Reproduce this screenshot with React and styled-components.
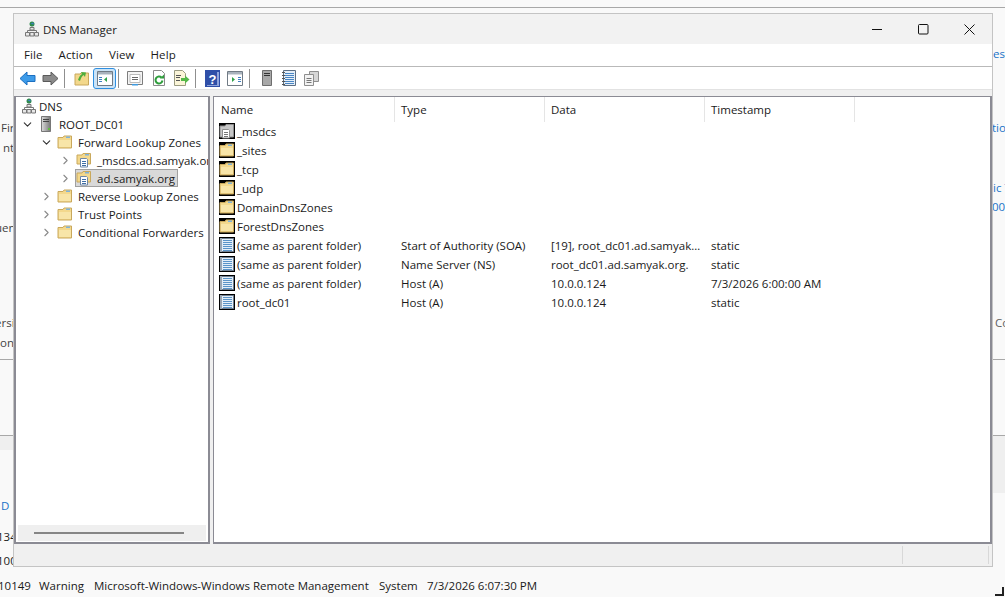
import styled, { createGlobalStyle } from "styled-components";
import { ChevronRight, ChevronDown } from "lucide-react";

const GlobalStyle = createGlobalStyle`
  html, body { margin: 0; padding: 0; background: #f9f9f9; overflow: hidden; }
  #root { width: 1005px; height: 597px; }
`;

const Desktop = styled.div`
  position: relative;
  width: 1005px;
  height: 597px;
  overflow: hidden;
  background: #f9f9f9;
  font-family: "Open Sans", "Noto Sans", sans-serif;
  font-size: 11.5px;
  color: #1a1a1a;
`;

const BackLine = styled.div`
  position: absolute;
  left: 0;
  right: 0;
  top: ${({ $y }) => $y}px;
  height: 1px;
  background: #a8a8a8;
`;

const BackBand = styled.div`
  position: absolute;
  left: ${({ $x }) => $x}px;
  width: 14px;
  top: 436px;
  height: ${({ $h }) => $h}px;
  background: #efefef;
`;

const BackText = styled.span`
  position: absolute;
  left: ${({ $x }) => $x}px;
  top: ${({ $y }) => $y - 9}px;
  line-height: 18px;
  white-space: nowrap;
  color: ${({ $c }) => $c || "#444"};
`;

const EventRow = styled.div`
  position: absolute;
  left: -2px;
  top: 577px;
  display: flex;
  line-height: 18px;
  white-space: nowrap;
`;

const EventCell = styled.span`
  width: ${({ $w }) => $w}px;
`;

const Grip = styled.div`
  position: absolute;
  left: 995px;
  top: 587px;
  width: 7px;
  height: 7px;
  border-right: 2px solid #222;
  border-bottom: 2px solid #222;
`;

const Window = styled.div`
  position: absolute;
  left: 13px;
  top: 13px;
  width: 978px;
  height: 552px;
  display: flex;
  flex-direction: column;
  border: 1px solid #c4c4c4;
  background: #f0f0f0;
`;

const TitleBar = styled.div`
  height: 30px;
  display: flex;
  align-items: center;
  padding-left: 10px;
  background: #f2f2f2;
`;

const TitleText = styled.span`
  margin-left: 3px;
  flex: 1;
`;

const CaptionButton = styled.div`
  width: 46px;
  height: 30px;
  display: flex;
  align-items: center;
  justify-content: center;
`;

const MenuBar = styled.div`
  height: 20px;
  padding: 0 0 2px 10px;
  display: flex;
  align-items: center;
  gap: 16px;
  background: #fff;
  border-bottom: 1px solid #b9b9b9;
  letter-spacing: 0.1px;
`;

const Toolbar = styled.div`
  height: 22px;
  display: flex;
  align-items: center;
  padding-left: 2px;
  background: #fff;
  border-bottom: 1px solid #e2e2e2;
`;

const ToolButton = styled.div`
  width: ${({ $w }) => $w}px;
  height: 21px;
  box-sizing: border-box;
  display: flex;
  align-items: center;
  justify-content: center;
  border-radius: 3px;
  ${({ $on }) => $on && "background: #cce4f7; border: 1px solid #2f8fe0;"}
`;

const ToolSep = styled.div`
  width: 1px;
  height: 19px;
  background: #8f8f8f;
  margin: 0 ${({ $r }) => $r}px 0 ${({ $l }) => $l}px;
`;

const Panes = styled.div`
  height: 448px;
  margin-top: 6px;
  display: flex;
  gap: 3px;
`;

const TreePane = styled.div`
  width: 192px;
  display: flex;
  flex-direction: column;
  background: #fff;
  border: 2px solid #8b8b94;
  border-width: 1px 2px 2px 2px;
  overflow: hidden;
`;

const TreeBody = styled.div`
  flex: 1;
  overflow: hidden;
`;

const TreeRow = styled.div`
  height: 18px;
  display: flex;
  align-items: center;
  padding-left: ${({ $pad }) => $pad}px;
  white-space: nowrap;
`;

const Toggle = styled.span`
  width: 13px;
  flex: none;
  display: flex;
  justify-content: center;
  margin-right: 4px;
  color: ${({ $open }) => ($open ? "#333" : "#8a8a8a")};
`;

// icon and label together, this is what gets the selection box
const TreeItem = styled.div`
  display: flex;
  align-items: center;
  gap: ${({ $gap }) => $gap}px;
  height: 16px;
  padding-right: 2px;
  ${({ $sel }) => $sel && "background: #d9d9d9; outline: 1px solid #a0a0a0;"}
`;

const HScroll = styled.div`
  height: 16px;
  margin: 0 2px 1px;
  background: #efefef;
  display: flex;
  align-items: center;
  padding-left: 16px;
`;

const HThumb = styled.div`
  width: 150px;
  height: 2px;
  background: #858585;
`;

const ListPane = styled.div`
  flex: 1;
  background: #fff;
  border: 2px solid #8b8b94;
  border-width: 1px 2px 2px 1px;
  overflow: hidden;
`;

const HeaderRow = styled.div`
  display: flex;
  height: 25px;
`;

const HeaderCell = styled.div`
  box-sizing: border-box;
  width: ${({ $w }) => $w}px;
  padding-left: ${({ $pad }) => $pad}px;
  display: flex;
  align-items: center;
  border-right: 1px solid #e5e5e5;
`;

const ListRow = styled.div`
  display: flex;
  height: 19px;
  line-height: 19px;
  white-space: nowrap;
`;

const NameCell = styled.div`
  width: 182px;
  display: flex;
  padding-left: 5px;
  gap: 2px;
`;

const TextCell = styled.div`
  width: ${({ $w }) => $w}px;
  margin-right: ${({ $gap }) => $gap || 0}px;
  overflow: hidden;
  text-overflow: ellipsis;
`;

const IconBack = styled.span`
  width: 16px;
  height: 16px;
  margin-top: 1px;
  display: flex;
  background: #000;
`;

const StatusBar = styled.div`
  flex: 1;
  display: flex;
  justify-content: flex-end;
  padding: 2px 0;
`;

const StatusCell = styled.div`
  width: ${({ $w }) => $w}px;
  border-left: 1px solid #d8d8d8;
`;

// plain folder, the same drawing everywhere a container shows up
const Folder = () => (
  <svg width="16" height="16" viewBox="0 0 16 16">
    <path d="M1 3.5h5l1-1.5h7.5v12H1z" fill="#f3d88c" stroke="#c9a85c" />
    <path d="M2 6h12v7H2z" fill="#f8e5a8" />
    <path d="M9 2.5h4v1.500H9z" fill="#7fb2d9" />
  </svg>
);

const ZoneFolder = () => (
  <svg width="16" height="16" viewBox="0 0 16 16">
    <path d="M1 3h5l1-1.500h7.500V12H1z" fill="#f3d88c" stroke="#c9a85c" />
    <path d="M9 2h4v1.500H9z" fill="#7fb2d9" />
    <path d="M4.500 6.500h6l1 1v7.500h-7z" fill="#fff" stroke="#6d87a8" />
    <path d="M6 9.500h4M6 11.500h4M6 13.500h4" stroke="#3f6ea5" />
  </svg>
);

const GreyZone = () => (
  <svg width="16" height="16" viewBox="0 0 16 16">
    <path d="M1 3h5l1-1.500h7.500V14H1z" fill="#c6c6c6" stroke="#8e8e8e" />
    <path d="M3.500 6.500h6l1 1v7.500h-7z" fill="#fff" stroke="#8e8e8e" />
    <path d="M5 9.500h4M5 11.500h4M5 13.500h4" stroke="#777" />
  </svg>
);

const RecordIcon = () => (
  <svg width="16" height="16" viewBox="0 0 16 16">
    <path d="M1.500 1.500h13v13h-13z" fill="#e4eef8" stroke="#6e7f92" />
    <path d="M1 1h2v14H1z" fill="#9aa6b3" />
    <path d="M4 3.500h9M4 5.500h9M4 7.500h9M4 9.500h9M4 11.500h9M4 13.500h9" stroke="#5b94c8" />
  </svg>
);

const ServerIcon = () => (
  <svg width="16" height="16" viewBox="0 0 16 16">
    <defs>
      <linearGradient id="srv" x1="0" x2="1" y1="0" y2="0">
        <stop offset="0" stopColor="#dcdcdc" />
        <stop offset="1" stopColor="#777" />
      </linearGradient>
    </defs>
    <path d="M3.500.500h9v15h-9z" fill="url(#srv)" stroke="#777" />
    <path d="M5 3.500h6M5 5.500h6" stroke="#444" />
    <path d="M10 12h2v2h-2z" fill="#5fbf3f" />
  </svg>
);

const DnsIcon = () => (
  <svg width="16" height="16" viewBox="0 0 16 16">
    <circle cx="8" cy="3" r="2.500" fill="#2f8a4e" />
    <path d="M6.500 2.500l3-1v2z" fill="#3d7fd0" />
    <path d="M8 5.500v3M3.500 12V9.500h9V12" fill="none" stroke="#777" />
    <path d="M6 6.500h4v2.500H6zM1.500 11.500h4v3.500h-4zM10.500 11.500h4v3.500h-4zM6 11.500h4v3.500H6z" fill="#e8e8e8" stroke="#777" />
  </svg>
);

const Arrow = ({ flip, fill, stroke }) => (
  <svg width="17" height="15" viewBox="0 0 17 15" style={flip ? { transform: "scaleX(-1)" } : undefined}>
    <path d="M1 7.500L8 1v3.500h8v6H8V14z" fill={fill} stroke={stroke} />
  </svg>
);

const UpFolder = () => (
  <svg width="16" height="16" viewBox="0 0 16 16">
    <path d="M1 4h5l1-1h7.500v12H1z" fill="#f3d88c" stroke="#c9a85c" />
    <path d="M4 10C5 7 6 5 8 4L7 2l5 .500-1 4.500-1.500-2C8 6 7 8 6 11z" fill="#4fae3c" />
  </svg>
);

const PanelIcon = ({ arrow, right }) => (
  <svg width="16" height="15" viewBox="0 0 16 15">
    <path d="M.5.500h15v14H.5z" fill="#fff" stroke="#717b85" />
    <path d="M1 1h14v2.500H1z" fill="#a9b3bd" />
    <path d={right ? "M11 6.500h3M11 8.500h3M11 10.500h3" : "M2 6.500h3M2 8.500h3M2 10.500h3"} stroke="#3f7fc0" />
    <path d={arrow} fill="#2fa24a" />
  </svg>
);

const PropsIcon = () => (
  <svg width="16" height="16" viewBox="0 0 16 16">
    <path d="M.5 1.500h15v13H.5z" fill="#f4f4f4" stroke="#7d7d7d" />
    <path d="M3 4.500h10v8H3z" fill="#fff" stroke="#bbb" />
    <path d="M5 7.500h6M5 9.500h6" stroke="#666" />
    <path d="M5 14h6v1.500H5z" fill="#3f9be0" />
  </svg>
);

const RefreshIcon = () => (
  <svg width="16" height="16" viewBox="0 0 16 16">
    <path d="M2.500.500h8l3 3v12h-11z" fill="#fff" stroke="#8a8a8a" />
    <path d="M11.500 10.500a3.500 3.500 0 1 1-1-3" fill="none" stroke="#2f9e3c" strokeWidth="2" />
    <path d="M9 8.500h4v-4z" fill="#2f9e3c" />
  </svg>
);

const ExportIcon = () => (
  <svg width="17" height="16" viewBox="0 0 17 16">
    <path d="M1.500.500h8l3 3v12h-11z" fill="#fbf5d8" stroke="#9a9a80" />
    <path d="M3 5.500h5M3 7.500h4M3 10.500h4" stroke="#555" />
    <path d="M8 8h4V5.500L16.500 9.500 12 13.500V11H8z" fill="#54b848" />
  </svg>
);

const HelpIcon = () => (
  <svg width="15" height="17" viewBox="0 0 15 17">
    <path d="M0 0h15v17H0z" fill="#2f4fa8" />
    <path d="M12 2h2v14H2v-1h10z" fill="#8fa4dc" />
    <text x="7.500" y="13.500" textAnchor="middle" fontSize="13" fontWeight="700" fontFamily="Liberation Sans" fill="#fff">?</text>
  </svg>
);

const TallServer = () => (
  <svg width="10" height="16" viewBox="0 0 10 16">
    <path d="M.5.500h9v15h-9z" fill="#a8a8a8" stroke="#6e6e6e" />
    <path d="M2 3.500h6M2 5.500h6" stroke="#333" />
  </svg>
);

const NotebookIcon = () => (
  <svg width="16" height="16" viewBox="0 0 16 16">
    <path d="M2.500.500h12v15h-12z" fill="#e4eef8" stroke="#5c6f85" />
    <path d="M4 3.500h9M4 5.500h9M4 7.500h9M4 9.500h9M4 11.500h9M4 13.500h9" stroke="#4a86c4" />
    <path d="M1 2.500h3M1 5.500h3M1 8.500h3M1 11.500h3M1 14.500h3" stroke="#555" />
  </svg>
);

const CopyIcon = () => (
  <svg width="15" height="15" viewBox="0 0 15 15">
    <path d="M5.500.500h9v10h-9z" fill="#d6d6d6" stroke="#8e8e8e" />
    <path d="M.5 3.500h9v11h-9z" fill="#f2f2f2" stroke="#8e8e8e" />
    <path d="M2.500 7.500h5M2.500 9.500h5M2.500 11.500h5" stroke="#777" />
  </svg>
);

const treeItems = [
  { pad: 5, open: true, icon: <ServerIcon />, label: "ROOT_DC01" },
  { pad: 24, open: true, icon: <Folder />, label: "Forward Lookup Zones" },
  { pad: 43, open: false, icon: <ZoneFolder />, label: "_msdcs.ad.samyak.org" },
  { pad: 43, open: false, icon: <ZoneFolder />, label: "ad.samyak.org", sel: true },
  { pad: 24, open: false, icon: <Folder />, label: "Reverse Lookup Zones" },
  { pad: 24, open: false, icon: <Folder />, label: "Trust Points" },
  { pad: 24, open: false, icon: <Folder />, label: "Conditional Forwarders" },
];

const columns = [
  { label: "Name", w: 181, pad: 7 },
  { label: "Type", w: 150, pad: 6 },
  { label: "Data", w: 160, pad: 6 },
  { label: "Timestamp", w: 150, pad: 6 },
];

const rows = [
  { icon: <GreyZone />, name: "_msdcs" },
  { icon: <Folder />, name: "_sites" },
  { icon: <Folder />, name: "_tcp" },
  { icon: <Folder />, name: "_udp" },
  { icon: <Folder />, name: "DomainDnsZones" },
  { icon: <Folder />, name: "ForestDnsZones" },
  { icon: <RecordIcon />, name: "(same as parent folder)", type: "Start of Authority (SOA)", data: "[19], root_dc01.ad.samyak.org.", time: "static" },
  { icon: <RecordIcon />, name: "(same as parent folder)", type: "Name Server (NS)", data: "root_dc01.ad.samyak.org.", time: "static" },
  { icon: <RecordIcon />, name: "(same as parent folder)", type: "Host (A)", data: "10.0.0.124", time: "7/3/2026 6:00:00 AM" },
  { icon: <RecordIcon />, name: "root_dc01", type: "Host (A)", data: "10.0.0.124", time: "static" },
];

const fragments = [
  { t: "Fir", x: 1, y: 128 },
  { t: "nt", x: 3, y: 148 },
  { t: "uen", x: -5, y: 228 },
  { t: "ersi", x: -5, y: 323 },
  { t: "on", x: 0, y: 343 },
  { t: "D", x: 1, y: 506, c: "#1a73c8" },
  { t: "134", x: -3, y: 537, c: "#222" },
  { t: "100", x: -3, y: 561, c: "#222" },
  { t: "es", x: 993, y: 54, c: "#1a73c8" },
  { t: "tio", x: 992, y: 128, c: "#1a73c8" },
  { t: "ic T", x: 993, y: 188, c: "#1a73c8" },
  { t: "001", x: 992, y: 207, c: "#1a73c8" },
  { t: "Co", x: 995, y: 323, c: "#5f5f5f" },
];

const App = () => (
  <Desktop>
    <GlobalStyle />
    <BackLine $y={7} />
    <BackLine $y={359} />
    <BackLine $y={435} />
    <BackBand $x={0} $h={14} />
    <BackBand $x={991} $h={57} />
    {fragments.map((f) => (
      <BackText key={f.t} $x={f.x} $y={f.y} $c={f.c}>{f.t}</BackText>
    ))}
    <EventRow>
      <EventCell $w={41}>10149</EventCell>
      <EventCell $w={55}>Warning</EventCell>
      <EventCell $w={285}>Microsoft-Windows-Windows Remote Management</EventCell>
      <EventCell $w={48}>System</EventCell>
      <EventCell $w={120}>7/3/2026 6:07:30 PM</EventCell>
    </EventRow>
    <Grip />

    <Window>
      <TitleBar>
        <DnsIcon />
        <TitleText>DNS Manager</TitleText>
        <CaptionButton>
          <svg width="11" height="11" viewBox="0 0 11 11"><path d="M0 5.500h10" stroke="#111" /></svg>
        </CaptionButton>
        <CaptionButton>
          <svg width="11" height="11" viewBox="0 0 11 11"><rect x=".5" y=".5" width="9.500" height="9.500" rx="1" fill="none" stroke="#111" /></svg>
        </CaptionButton>
        <CaptionButton>
          <svg width="11" height="11" viewBox="0 0 11 11"><path d="M.5.500l10 10M10.500.500l-10 10" stroke="#111" /></svg>
        </CaptionButton>
      </TitleBar>

      <MenuBar>
        <span>File</span>
        <span>Action</span>
        <span>View</span>
        <span>Help</span>
      </MenuBar>

      <Toolbar>
        <ToolButton $w={23}><Arrow fill="#3d9be9" stroke="#1c6fc0" /></ToolButton>
        <ToolButton $w={23}><Arrow flip fill="#8a8a8a" stroke="#5a5a5a" /></ToolButton>
        <ToolSep $l={2} $r={5} />
        <ToolButton $w={23}><UpFolder /></ToolButton>
        <ToolButton $w={23} $on><PanelIcon arrow="M10 6v5l-3-2.500z" /></ToolButton>
        <ToolSep $l={2} $r={5} />
        <ToolButton $w={22}><PropsIcon /></ToolButton>
        <ToolButton $w={26}><RefreshIcon /></ToolButton>
        <ToolButton $w={18}><ExportIcon /></ToolButton>
        <ToolSep $l={5} $r={5} />
        <ToolButton $w={22}><HelpIcon /></ToolButton>
        <ToolButton $w={24}><PanelIcon right arrow="M5 6v5l3-2.500z" /></ToolButton>
        <ToolSep $l={2} $r={9} />
        <ToolButton $w={16}><TallServer /></ToolButton>
        <ToolButton $w={28}><NotebookIcon /></ToolButton>
        <ToolButton $w={16}><CopyIcon /></ToolButton>
      </Toolbar>

      <Panes>
        <TreePane>
          <TreeBody>
            <TreeRow $pad={5}>
              <TreeItem $gap={2}>
                <DnsIcon />
                DNS
              </TreeItem>
            </TreeRow>
            {treeItems.map((item) => (
              <TreeRow key={item.label} $pad={item.pad}>
                <Toggle $open={item.open}>
                  {item.open ? <ChevronDown size={13} strokeWidth={2} /> : <ChevronRight size={13} strokeWidth={2} />}
                </Toggle>
                <TreeItem $gap={5} $sel={item.sel}>
                  {item.icon}
                  {item.label}
                </TreeItem>
              </TreeRow>
            ))}
          </TreeBody>
          <HScroll><HThumb /></HScroll>
        </TreePane>

        <ListPane>
          <HeaderRow>
            {columns.map((c) => (
              <HeaderCell key={c.label} $w={c.w} $pad={c.pad}>{c.label}</HeaderCell>
            ))}
          </HeaderRow>
          {rows.map((r, i) => (
            <ListRow key={i}>
              <NameCell>
                <IconBack>{r.icon}</IconBack>
                {r.name}
              </NameCell>
              <TextCell $w={150}>{r.type}</TextCell>
              <TextCell $w={152} $gap={8}>{r.data}</TextCell>
              <TextCell $w={150}>{r.time}</TextCell>
            </ListRow>
          ))}
        </ListPane>
      </Panes>

      <StatusBar>
        <StatusCell $w={85} />
        <StatusCell $w={3} />
      </StatusBar>
    </Window>
  </Desktop>
);

export default App;
